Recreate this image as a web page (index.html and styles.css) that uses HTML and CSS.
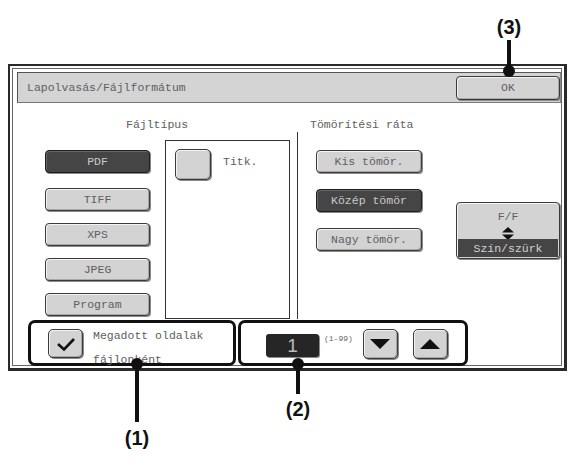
FILE: index.html
```html
<!DOCTYPE html>
<html>
<head>
<meta charset="utf-8">
<link rel="stylesheet" href="styles.css">
</head>
<body>
<div class="page">
  <div class="panel">
    <div class="frame">
      <div class="titlebar">
        <span class="title">Lapolvasás/Fájlformátum</span>
        <div class="btn ok">OK</div>
      </div>
      <div class="heads">
        <div class="head head-a">Fájltípus</div>
        <div class="head head-b">Tömörítési ráta</div>
      </div>
      <div class="content">
        <div class="col-a">
          <div class="btn dark first">PDF</div>
          <div class="btn">TIFF</div>
          <div class="btn">XPS</div>
          <div class="btn">JPEG</div>
          <div class="btn">Program</div>
        </div>
        <div class="titk-box">
          <div class="check"></div>
          <span class="titk-label">Titk.</span>
        </div>
        <div class="divider"></div>
        <div class="col-c">
          <div class="btn">Kis tömör.</div>
          <div class="btn dark">Közép tömör</div>
          <div class="btn">Nagy tömör.</div>
        </div>
        <div class="ff">
          <div class="ff-top">F/F</div>
          <div class="ff-arrows">
            <svg width="12" height="13" viewBox="0 0 12 13"><polygon points="6,0 12,5.5 0,5.5" fill="#111"/><polygon points="0,7.5 12,7.5 6,13" fill="#111"/></svg>
          </div>
          <div class="ff-bottom">Szín/szürk</div>
        </div>
      </div>
      <div class="bottom">
        <div class="group g1">
          <div class="check checked">
            <svg width="22" height="16" viewBox="0 0 22 16"><polyline points="3,8 9,13.5 19,3" fill="none" stroke="#111" stroke-width="2.6"/></svg>
          </div>
          <div class="g1-text">Megadott oldalak<br>fájlonként</div>
        </div>
        <div class="group g2">
          <div class="num">1</div>
          <span class="range">(1-99)</span>
          <div class="btn arrow down">
            <svg width="22" height="12" viewBox="0 0 22 12"><polygon points="1,1 21,1 11,11" fill="#111"/></svg>
          </div>
          <div class="btn arrow up">
            <svg width="22" height="12" viewBox="0 0 22 12"><polygon points="11,1 21,11 1,11" fill="#111"/></svg>
          </div>
        </div>
      </div>
    </div>
  </div>

  <div class="callout c3">
    <span class="label">(3)</span>
    <span class="line"></span>
    <span class="dot"></span>
  </div>
  <div class="callout c2">
    <span class="dot"></span>
    <span class="line"></span>
    <span class="label">(2)</span>
  </div>
  <div class="callout c1">
    <span class="dot"></span>
    <span class="line"></span>
    <span class="label">(1)</span>
  </div>
</div>
</body>
</html>
```

FILE: styles.css
```css
html, body {
  margin: 0;
  padding: 0;
  background: #fff;
}
.page {
  position: relative;
  width: 571px;
  height: 468px;
  overflow: hidden;
  font-family: "Liberation Mono", "DejaVu Sans Mono", monospace;
  font-size: 11.5px;
  color: #606060;
}
.panel {
  margin: 64px 0 0 8px;
  width: 559px;
  height: 307px;
  box-sizing: border-box;
  border: 2px solid #2a2a2a;
  border-right-width: 3px;
  border-bottom-width: 3px;
  padding: 2px;
}
.frame {
  height: 100%;
  box-sizing: border-box;
  border: 1px solid #666;
  padding: 3px 0 0 4px;
}
.titlebar {
  height: 31px;
  box-sizing: border-box;
  border: 1px solid #555;
  border-right-color: #888;
  border-bottom-color: #777;
  background: #d4d4d4;
  display: flex;
  align-items: center;
}
.title {
  padding-left: 9px;
}
.btn {
  box-sizing: border-box;
  height: 23px;
  border: 1px solid #3a3a3a;
  border-radius: 4px;
  background: #d3d3d3;
  box-shadow: inset 1px 1px 0 #f4f4f4, inset -1px -1px 0 #a8a8a8, 1px 1px 0 #8a8a8a;
  display: flex;
  align-items: center;
  justify-content: center;
  color: #606060;
  line-height: 1;
}
.btn.dark {
  background: #454545;
  border-color: #1e1e1e;
  box-shadow: inset 1px 1px 0 #666, 1px 1px 0 #888;
  color: #c9c9c9;
}
.ok {
  margin-left: auto;
  width: 104px;
  height: 24px;
}
.heads {
  height: 29px;
  display: flex;
  padding-top: 15px;
  box-sizing: border-box;
  line-height: 14px;
}
.head-a {
  width: 293px;
  padding-left: 109px;
  box-sizing: border-box;
}
.content {
  height: 187px;
  display: flex;
  align-items: flex-start;
}
.col-a {
  margin: 18px 0 0 28px;
  width: 105px;
  display: flex;
  flex-direction: column;
  gap: 12px;
}
.col-a .first {
  margin-bottom: 3px;
}
.titk-box {
  margin: 8px 0 0 15px;
  width: 125px;
  height: 179px;
  box-sizing: border-box;
  border: 1px solid #333;
  padding: 8px 0 0 9px;
  display: flex;
  align-items: flex-start;
  gap: 12px;
}
.check {
  width: 36px;
  height: 31px;
  flex: none;
  box-sizing: border-box;
  border: 1px solid #3a3a3a;
  border-radius: 5px;
  background: #d3d3d3;
  box-shadow: inset 1px 1px 0 #f4f4f4, inset -1px -1px 0 #a8a8a8, 1px 1px 0 #8a8a8a;
  display: flex;
  align-items: center;
  justify-content: center;
}
.titk-label {
  margin-top: 6px;
  line-height: 14px;
}
.divider {
  margin-left: 7px;
  width: 1px;
  height: 187px;
  background: #333;
}
.col-c {
  margin: 18px 0 0 18px;
  width: 106px;
  display: flex;
  flex-direction: column;
  gap: 16px;
}
.ff {
  margin: 70px 0 0 34px;
  width: 104px;
  height: 57px;
  box-sizing: border-box;
  border: 1px solid #3a3a3a;
  border-radius: 4px;
  background: #d3d3d3;
  box-shadow: inset 1px 1px 0 #f4f4f4, 1px 1px 0 #8a8a8a;
  overflow: hidden;
  display: flex;
  flex-direction: column;
}
.ff-top {
  height: 24px;
  display: flex;
  align-items: center;
  justify-content: center;
  padding-top: 3px;
  box-sizing: border-box;
}
.ff-arrows {
  height: 12px;
  display: flex;
  justify-content: center;
  align-items: center;
}
.ff-arrows svg {
  display: block;
}
.ff-bottom {
  flex: 1;
  margin: 0 1px 1px 1px;
  background: #454545;
  color: #d0d0d0;
  display: flex;
  align-items: center;
  justify-content: center;
}
.bottom {
  margin: 1px 0 0 11px;
  display: flex;
  gap: 2px;
}
.group {
  height: 46px;
  box-sizing: border-box;
  border: 3px solid #111;
  border-radius: 7px;
  background: #fff;
  display: flex;
  align-items: flex-start;
}
.g1 {
  width: 208px;
  padding: 6px 0 0 17px;
}
.check.checked {
  width: 35px;
  height: 29px;
}
.check svg {
  display: block;
}
.g1-text {
  margin-left: 10px;
  margin-top: -5px;
  line-height: 24px;
  white-space: nowrap;
}
.g2 {
  width: 230px;
  padding-left: 25px;
}
.num {
  margin-top: 11px;
  width: 53px;
  height: 23px;
  box-sizing: border-box;
  background: #262626;
  border-radius: 3px;
  box-shadow: 1px 1px 0 #888;
  color: #bbb;
  font-family: "Liberation Sans", Arial, sans-serif;
  font-size: 19px;
  line-height: 23px;
  text-align: center;
}
.range {
  margin: 11px 0 0 5px;
  font-size: 8px;
  color: #666;
  line-height: 10px;
}
.arrow {
  margin-top: 6px;
  width: 35px;
  height: 30px;
  border-radius: 5px;
}
.arrow svg {
  display: block;
}
.down {
  margin-left: 10px;
}
.up {
  margin-left: 15px;
}
.callout {
  position: absolute;
  display: flex;
  flex-direction: column;
  align-items: center;
  width: 40px;
}
.callout .label {
  font-family: "Liberation Sans", Arial, sans-serif;
  font-weight: bold;
  font-size: 20px;
  line-height: 22px;
  color: #111;
}
.callout .line {
  width: 4px;
  background: #111;
}
.callout .dot {
  width: 12px;
  height: 12px;
  border-radius: 50%;
  background: #111;
}
.c3 {
  left: 489px;
  top: 16px;
}
.c3 .line {
  height: 31px;
  margin-top: 2px;
}
.c3 .dot {
  margin-top: -6px;
}
.c2 {
  left: 278px;
  top: 358px;
}
.c2 .line {
  height: 30px;
  margin-top: -6px;
}
.c2 .label {
  margin-top: 4px;
}
.c1 {
  left: 117px;
  top: 358px;
}
.c1 .line {
  height: 58px;
  margin-top: -6px;
}
.c1 .label {
  margin-top: 5px;
}
```
